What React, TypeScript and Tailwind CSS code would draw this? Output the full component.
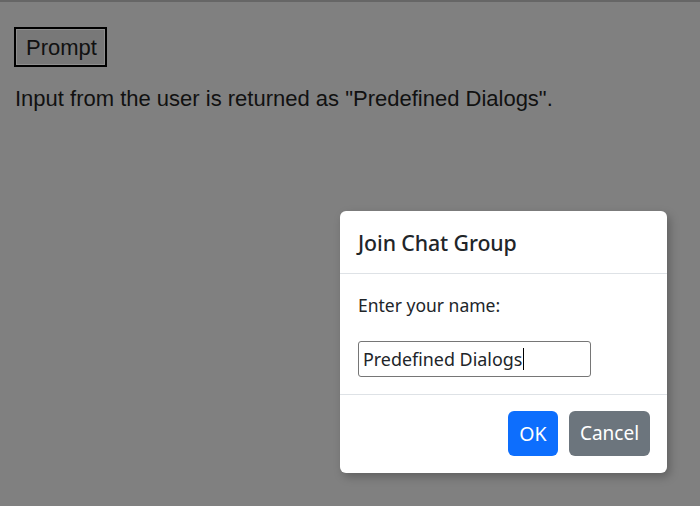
import React from "react";

export default function App() {
  return (
    <div className="relative h-[506px] w-[700px] overflow-hidden bg-[#808080]" style={{ fontFamily: '"Liberation Sans", Arial, sans-serif' }}>
      <div className="h-[2px] bg-[#666666]" />
      <div className="px-[14px] pt-[25px]">
        <div className="inline-flex border-2 border-black">
          <div className="border border-[#8e8e8e] bg-[#787878] pl-[9px] pr-[7px] h-[36px] flex items-center text-[22px] text-[#111]">
            Prompt
          </div>
        </div>
        <p className="mt-[16px] pl-[1px] text-[22px] leading-[32px] text-[#111]">
          Input from the user is returned as "Predefined Dialogs".
        </p>
      </div>

      <div
        className="absolute left-[340px] top-[211px] w-[327px] rounded-[6px] bg-white text-[#212529] shadow-[3px_4px_10px_rgba(0,0,0,0.25)]"
        style={{ fontFamily: '"Noto Sans", "Open Sans", sans-serif' }}
      >
        <div className="border-b border-[#dee2e6] px-[18px] py-[16px]">
          <h5 className="mt-[1px] text-[21.3px] font-medium leading-[29px] tracking-[-0.1px]">Join Chat Group</h5>
        </div>
        <div className="px-[18px] pt-[18px] pb-[17px]">
          <p className="text-[17.5px] leading-[26px]">Enter your name:</p>
          <div className="mt-[23px] flex h-[36px] w-[233px] items-center rounded-[3px] border border-[#767676] px-[4px] text-[17.9px]">
            <span>Predefined Dialogs</span>
            <span className="ml-[1px] inline-block h-[22px] w-[1px] bg-black" />
          </div>
        </div>
        <div className="flex justify-end gap-[11px] border-t border-[#dee2e6] px-[17px] pt-[16px] pb-[17px]">
          <div className="flex h-[45px] w-[50px] items-center justify-center rounded-[6px] bg-[#0d6efd] text-[19.5px] text-white">
            OK
          </div>
          <div className="flex h-[45px] w-[81px] items-center justify-center rounded-[6px] bg-[#6c757d] text-[19px] text-white">
            Cancel
          </div>
        </div>
      </div>
    </div>
  );
}
